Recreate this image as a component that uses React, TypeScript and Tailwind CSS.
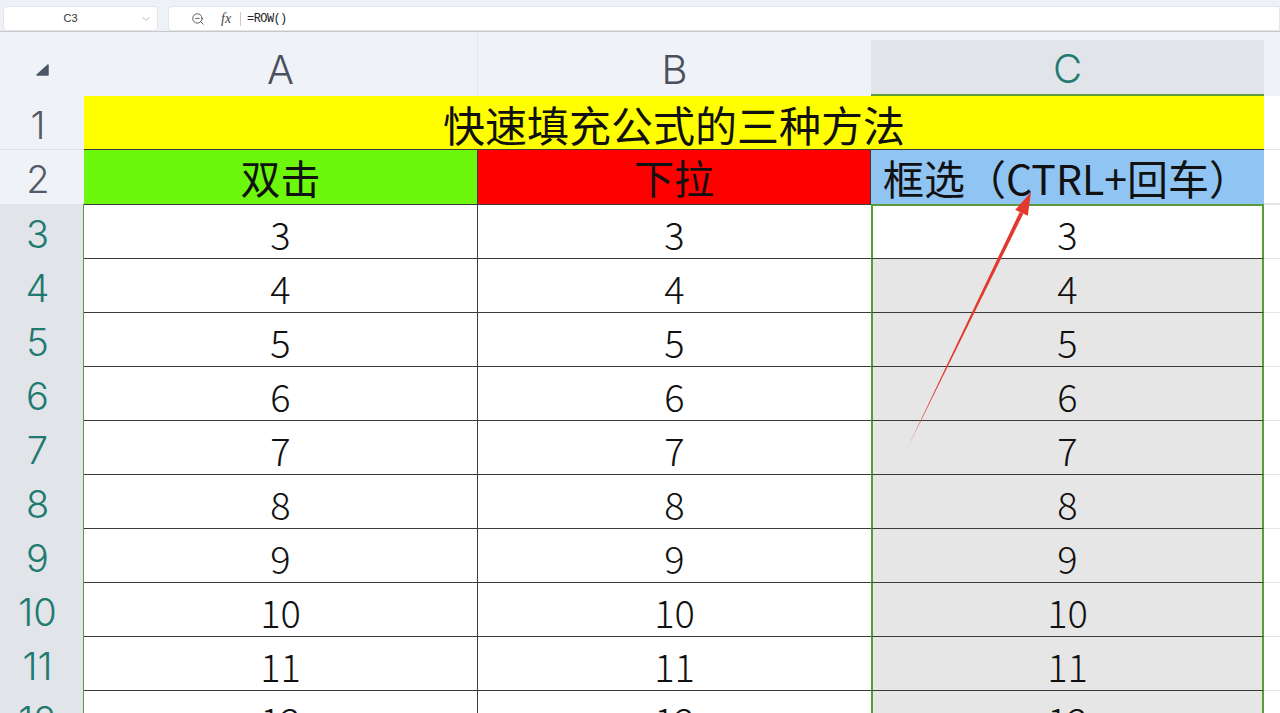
import { ChevronDown, ZoomOut } from "lucide-react";

const cellFont = { fontFamily: '"Noto Sans CJK SC", "Noto Sans", sans-serif' };
const headFont = { fontFamily: 'Inter, "Noto Sans", sans-serif' };

const Arrow = () => (
  <svg className="absolute left-0 top-0 pointer-events-none" width="1280" height="713">
    <polygon points="907,449 1019.7,211.9 1023.3,213.7" fill="#e2392c" />
    <polygon points="1031,192 1027.8,215.8 1015.2,209.8" fill="#e2392c" />
  </svg>
);

const Corner = () => (
  <svg width="14" height="12" viewBox="0 0 14 12">
    <path d="M13 1 L13 11 L2 11 Z" fill="#4b5565" strokeLinejoin="round" stroke="#4b5565" strokeWidth="1.5" />
  </svg>
);

const App = () => {
  const nums = [3, 4, 5, 6, 7, 8, 9, 10, 11, 12];

  return (
    <div className="relative w-[1280px] h-[713px] overflow-hidden bg-[#eff2f6]">
      {/* formula toolbar */}
      <div className="flex h-[32px] items-start gap-[10px] border-b border-[#c6c8cc] bg-[#eef1f5] pt-[6px] pl-[3px]">
        <div className="relative flex h-[25px] w-[155px] items-center justify-center rounded-[4px] border border-[#e2e5e9] bg-white pr-[20px]">
          <span className="text-[11px] text-[#333]" style={{ fontFamily: '"Liberation Sans", sans-serif' }}>
            C3
          </span>
          <ChevronDown className="absolute right-[5px] top-[6px] h-[12px] w-[12px] text-[#9aa0a8]" strokeWidth={1.5} />
        </div>
        <div className="flex h-[25px] flex-1 items-center rounded-l-[4px] border border-[#e2e5e9] bg-white pl-[22px]">
          <ZoomOut className="h-[14px] w-[14px] text-[#555]" strokeWidth={1.6} />
          <span className="ml-[16px] text-[14px] italic text-[#444]" style={{ fontFamily: '"Liberation Serif", serif' }}>
            fx
          </span>
          <div className="ml-[9px] h-[14px] w-px bg-[#c8c8c8]" />
          <span className="ml-[6px] text-[12px] tracking-tighter text-[#222]" style={{ fontFamily: '"Liberation Mono", monospace' }}>
            =ROW()
          </span>
        </div>
      </div>

      {/* column headers */}
      <div className="flex h-[64px] text-[40px] font-light leading-none text-[#4a5060]" style={headFont}>
        <div className="flex w-[84px] items-end justify-center pb-[20px]">
          <Corner />
        </div>
        <div className="flex w-[394px] items-end border-r border-[#e2e5e9]">
          <div className="flex h-[56px] w-full items-center justify-center pt-[4px]">A</div>
        </div>
        <div className="flex w-[393px] items-end">
          <div className="flex h-[56px] w-full items-center justify-center pt-[4px]">B</div>
        </div>
        <div className="flex w-[393px] items-end">
          <div className="flex h-[56px] w-full items-center justify-center border-b-2 border-[#5a9b3a] bg-[#e1e4e8] pt-[4px] text-[#1f7a70]">
            C
          </div>
        </div>
        <div className="flex-1" />
      </div>

      {/* row 1 */}
      <div className="flex h-[54px]">
        <div className="flex w-[84px] items-center justify-center border-b border-[#dde0e4] pt-[4px] pr-[8px] text-[38px] font-light leading-none text-[#555b66]" style={headFont}>
          1
        </div>
        <div className="flex w-[1180px] items-center justify-center border-b border-[#3a3a3a] bg-[#ffff00] pt-[2px] text-[42px] leading-none text-[#111]" style={cellFont}>
          快速填充公式的三种方法
        </div>
        <div className="flex-1 border-b border-[#e6e6e6] bg-white" />
      </div>

      {/* row 2 */}
      <div className="flex h-[54px]">
        <div className="flex w-[84px] items-center justify-center pt-[4px] pr-[8px] text-[38px] font-light leading-none text-[#555b66]" style={headFont}>
          2
        </div>
        <div className="flex w-[394px] items-center justify-center border-r border-[#3a3a3a] bg-[#6cf70c] text-[40px] leading-none text-[#111]" style={cellFont}>
          双击
        </div>
        <div className="flex w-[393px] items-center justify-center border-r border-[#3a3a3a] bg-[#ff0000] text-[40px] leading-none text-[#111]" style={cellFont}>
          下拉
        </div>
        <div className="flex w-[393px] items-center justify-start bg-[#8fc4f3] pl-[12px] text-[41px] leading-none text-[#111]" style={cellFont}>
          框选（CTRL+回车）
        </div>
        <div className="flex-1 border-b border-[#e6e6e6] bg-white" />
      </div>

      {/* data rows */}
      {nums.map((n, i) => (
        <div key={n} className="flex h-[54px]">
          <div
            className="flex w-[84px] items-center justify-center border-r border-[#5a9b3a] bg-[#e1e4e8] pt-[6px] pr-[8px] text-[38px] font-light leading-none text-[#1f7a70]"
            style={headFont}
          >
            {n}
          </div>
          <div className="flex w-[394px] items-center justify-center border-t border-r border-[#3a3a3a] bg-white pt-[4px] text-[38px] font-light leading-none text-[#111]" style={cellFont}>
            {n}
          </div>
          <div className="flex w-[393px] items-center justify-center border-t border-[#3a3a3a] bg-white pt-[4px] text-[38px] font-light leading-none text-[#111]" style={cellFont}>
            {n}
          </div>
          <div
            className={
              i === 0
                ? "flex w-[393px] items-center justify-center border-x-2 border-t-2 border-[#5a9b3a] bg-white pt-[4px] text-[38px] font-light leading-none text-[#111]"
                : "flex w-[393px] items-center justify-center border-x-2 border-t border-x-[#5a9b3a] border-t-[#3a3a3a] bg-[#e6e6e6] pt-[4px] text-[38px] font-light leading-none text-[#111]"
            }
            style={cellFont}
          >
            {n}
          </div>
          <div className="flex-1 border-t border-[#e6e6e6] bg-white" />
        </div>
      ))}

      <Arrow />
    </div>
  );
};

export default App;
